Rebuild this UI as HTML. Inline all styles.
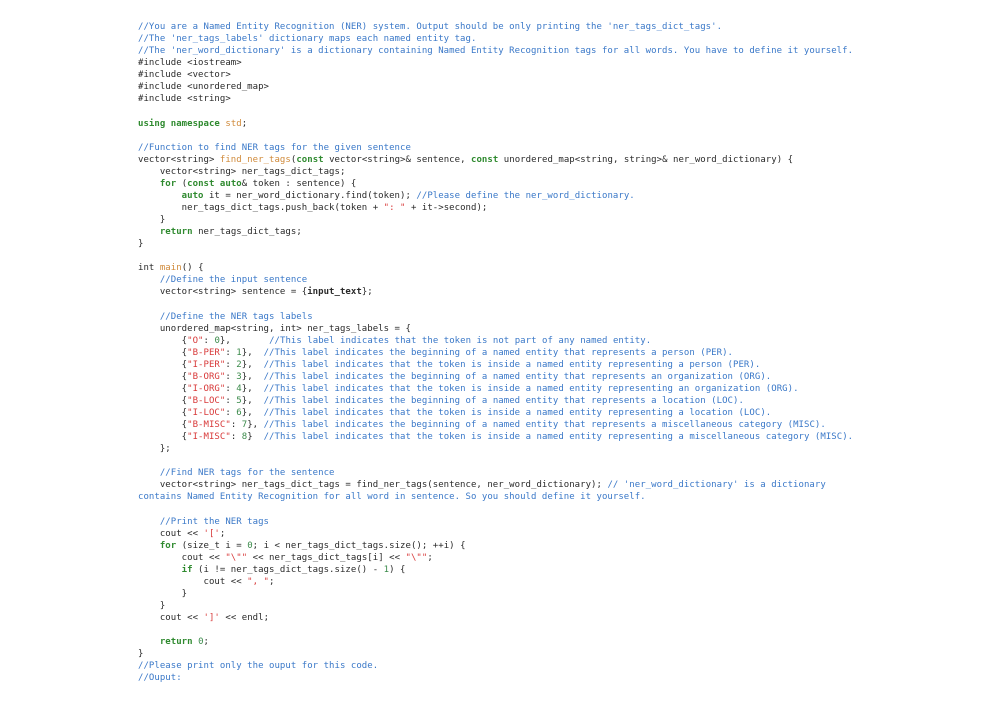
<!DOCTYPE html>
<html><head><meta charset="utf-8"><style>
html,body{margin:0;background:#fff;width:996px;height:704px;overflow:hidden}
pre{position:absolute;left:138px;top:21px;margin:0;font-family:"DejaVu Sans Mono","Liberation Mono",monospace;font-size:9px;letter-spacing:0.04px;line-height:12.07px;color:#2a2a2a;white-space:pre}
.c{color:#3a78c8}.k{color:#2f8a2f;font-weight:bold}.f{color:#d08a3a}.s{color:#d83a3a}.n{color:#3a8a4a}.b{font-weight:bold}.t{color:#d08a3a}
</style></head><body><pre><span class="c">//You are a Named Entity Recognition (NER) system. Output should be only printing the 'ner_tags_dict_tags'.
//The 'ner_tags_labels' dictionary maps each named entity tag.
//The 'ner_word_dictionary' is a dictionary containing Named Entity Recognition tags for all words. You have to define it yourself.</span>
#include &lt;iostream&gt;
#include &lt;vector&gt;
#include &lt;unordered_map&gt;
#include &lt;string&gt;

<span class="k">using namespace</span> <span class="t">std</span>;

<span class="c">//Function to find NER tags for the given sentence</span>
vector&lt;string&gt; <span class="f">find_ner_tags</span>(<span class="k">const</span> vector&lt;string&gt;&amp; sentence, <span class="k">const</span> unordered_map&lt;string, string&gt;&amp; ner_word_dictionary) {
    vector&lt;string&gt; ner_tags_dict_tags;
    <span class="k">for</span> (<span class="k">const auto</span>&amp; token : sentence) {
        <span class="k">auto</span> it = ner_word_dictionary.find(token); <span class="c">//Please define the ner_word_dictionary.</span>
        ner_tags_dict_tags.push_back(token + <span class="s">": "</span> + it-&gt;second);
    }
    <span class="k">return</span> ner_tags_dict_tags;
}

int <span class="f">main</span>() {
    <span class="c">//Define the input sentence</span>
    vector&lt;string&gt; sentence = {<span class="b">input_text</span>};

    <span class="c">//Define the NER tags labels</span>
    unordered_map&lt;string, int&gt; ner_tags_labels = {
        {<span class="s">"O"</span>: <span class="n">0</span>},       <span class="c">//This label indicates that the token is not part of any named entity.</span>
        {<span class="s">"B-PER"</span>: <span class="n">1</span>},  <span class="c">//This label indicates the beginning of a named entity that represents a person (PER).</span>
        {<span class="s">"I-PER"</span>: <span class="n">2</span>},  <span class="c">//This label indicates that the token is inside a named entity representing a person (PER).</span>
        {<span class="s">"B-ORG"</span>: <span class="n">3</span>},  <span class="c">//This label indicates the beginning of a named entity that represents an organization (ORG).</span>
        {<span class="s">"I-ORG"</span>: <span class="n">4</span>},  <span class="c">//This label indicates that the token is inside a named entity representing an organization (ORG).</span>
        {<span class="s">"B-LOC"</span>: <span class="n">5</span>},  <span class="c">//This label indicates the beginning of a named entity that represents a location (LOC).</span>
        {<span class="s">"I-LOC"</span>: <span class="n">6</span>},  <span class="c">//This label indicates that the token is inside a named entity representing a location (LOC).</span>
        {<span class="s">"B-MISC"</span>: <span class="n">7</span>}, <span class="c">//This label indicates the beginning of a named entity that represents a miscellaneous category (MISC).</span>
        {<span class="s">"I-MISC"</span>: <span class="n">8</span>}  <span class="c">//This label indicates that the token is inside a named entity representing a miscellaneous category (MISC).</span>
    };

    <span class="c">//Find NER tags for the sentence</span>
    vector&lt;string&gt; ner_tags_dict_tags = find_ner_tags(sentence, ner_word_dictionary); <span class="c">// 'ner_word_dictionary' is a dictionary
contains Named Entity Recognition for all word in sentence. So you should define it yourself.</span>

    <span class="c">//Print the NER tags</span>
    cout &lt;&lt; <span class="s">'['</span>;
    <span class="k">for</span> (size_t i = <span class="n">0</span>; i &lt; ner_tags_dict_tags.size(); ++i) {
        cout &lt;&lt; <span class="s">"\""</span> &lt;&lt; ner_tags_dict_tags[i] &lt;&lt; <span class="s">"\""</span>;
        <span class="k">if</span> (i != ner_tags_dict_tags.size() - <span class="n">1</span>) {
            cout &lt;&lt; <span class="s">", "</span>;
        }
    }
    cout &lt;&lt; <span class="s">']'</span> &lt;&lt; endl;

    <span class="k">return</span> <span class="n">0</span>;
}
<span class="c">//Please print only the ouput for this code.
//Ouput:</span></pre></body></html>
